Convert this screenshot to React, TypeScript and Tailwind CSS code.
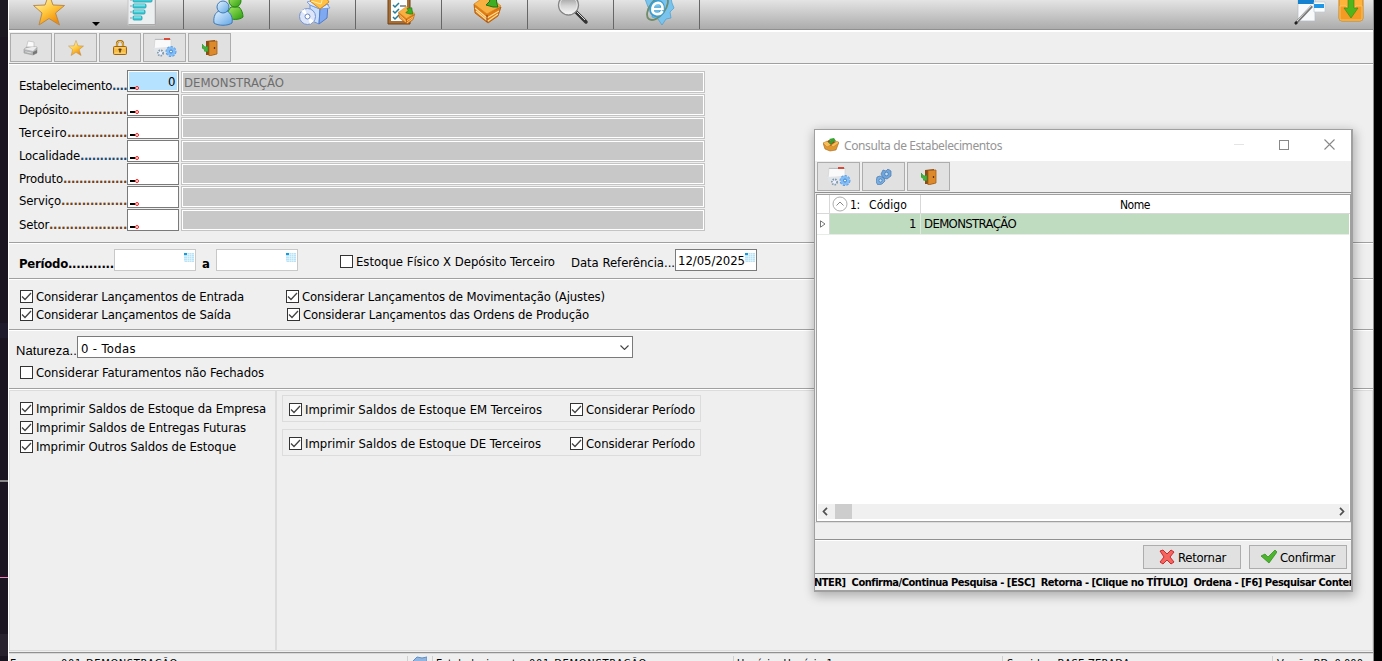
import { useLayoutEffect, useRef, useState } from 'react';
import type { ReactNode } from 'react';

const ui = 'font-["DejaVu_Sans_Condensed","DejaVu_Sans",sans-serif] font-stretch-condensed';

/* Single line of text whose tracking is adjusted so that it spans `w` pixels. */
function T({ w, children, className = '' }: { w: number; children: string; className?: string }) {
  const ref = useRef<HTMLSpanElement>(null);
  const [tracking, setTracking] = useState(0);
  useLayoutEffect(() => {
    const el = ref.current;
    if (!el) return;
    const natural = el.getBoundingClientRect().width - tracking * children.length;
    setTracking((w - natural) / children.length);
  }, [w, children]);
  return (
    <span
      ref={ref}
      className={`block h-4 w-max shrink-0 leading-4 whitespace-pre ${className}`}
      style={{ letterSpacing: `${tracking}px` }}
    >
      {children}
    </span>
  );
}

function Check({ checked = true, label, w, className = '' }: { checked?: boolean; label: string; w: number; className?: string }) {
  return (
    <label className={`flex h-[13px] items-center gap-[3px] ${className}`}>
      <span className="block h-[13px] w-[13px] shrink-0 border border-[#333] bg-white">
        {checked && (
          <svg viewBox="0 0 11 11" className="block h-[11px] w-[11px]">
            <path d="M1 5.500 4 8.500 10 2" fill="none" stroke="#444" strokeWidth="1.300" />
          </svg>
        )}
      </span>
      <T w={w}>{label}</T>
    </label>
  );
}

function Calendar({ className = '' }: { className?: string }) {
  return (
    <svg viewBox="0 0 10 9" className={`block h-[9px] w-[10px] shrink-0 ${className}`}>
      <path d="M0 0h10v9H1L0 8z" fill="#b9e4f7" />
      <path d="M0 3.5h10M0 5.5h10M0 7.5h10M3.5 0v9M5.5 0v9M7.5 0v9M3 1.5h7" stroke="#eefaff" strokeWidth=".5" />
      <path d="M0 0h3v2H0z" fill="#159be0" />
    </svg>
  );
}

function Star({ className = '' }: { className?: string }) {
  return (
    <svg viewBox="0 0 32 33" className={className}>
      <defs>
        <linearGradient id="star" x1="0" y1="0" x2="0.6" y2="1">
          <stop offset="0.2" stopColor="#fff2ae" />
          <stop offset="0.6" stopColor="#ffc83d" />
          <stop offset="1" stopColor="#ef8a0a" />
        </linearGradient>
      </defs>
      <path d="M16 1 20 12 31.500 12.500 22.500 20 26.500 32 16 25.500 6 32 9 20 .5 12.500 12 12z" fill="url(#star)" stroke="#b98a4c" strokeWidth="1" />
    </svg>
  );
}

function Chart() {
  return (
    <svg viewBox="0 0 30 33" className="block h-[33px] w-[30px]">
      <path d="M1 0h27v32H1z" fill="#eceff0" stroke="#c4c8c8" />
      <path d="M1.500 31.500h27V4" fill="none" stroke="#aaa" />
      <g fill="#43cbd6" stroke="#1a9cab" strokeWidth=".8">
        <rect x="6" y="5" width="19" height="4" rx="1" />
        <rect x="6" y="11" width="13" height="4" rx="1" />
        <rect x="6" y="17" width="12" height="4" rx="1" />
        <rect x="6" y="23" width="9" height="4" rx="1" />
      </g>
      <path d="M7 6h17M7 12h11M7 18h10M7 24h7" stroke="#aef2f5" />
      <path d="M3 7h2M3 13h2M3 19h2M3 25h2" stroke="#99a" />
    </svg>
  );
}

function Users() {
  return (
    <svg viewBox="0 0 32 33" className="block h-[33px] w-8">
      <defs>
        <linearGradient id="ub" x1="0" y1="0" x2="1" y2="1"><stop stopColor="#e4f3ff" /><stop offset="1" stopColor="#5fa6e4" /></linearGradient>
        <linearGradient id="ug" x1="0" y1="0" x2="1" y2="1"><stop stopColor="#a8ea68" /><stop offset="1" stopColor="#2a9d0e" /></linearGradient>
      </defs>
      <path d="M14 25c0-5 2-9 4-11h8c3 3 4 7 4 10-3 3-11 3-16 1z" fill="url(#ug)" stroke="#25870f" />
      <circle cx="22" cy="8" r="6" fill="url(#ug)" stroke="#25870f" />
      <path d="M1 30c-1-7 2-11 5-12h8c4 2 6 7 5 12-4 3-14 3-18 0z" fill="url(#ub)" stroke="#4079b8" />
      <circle cx="10" cy="14" r="6" fill="url(#ub)" stroke="#4079b8" />
    </svg>
  );
}

function DiscBox() {
  return (
    <svg viewBox="0 0 32 33" className="block h-[33px] w-8">
      <path d="M11 12 21 16 20 31 11 27z" fill="#c8defb" stroke="#6d93d9" />
      <path d="M21 16 29 11 28 25 20 31z" fill="#7fa9f0" stroke="#537bc7" />
      <path d="m11 12-3-3 7-2 6 9zM21 16l10-1-3-4z" fill="#dce9fc" stroke="#6d93d9" strokeWidth=".8" />
      <path d="m11 8 13-8 6 9-9 7z" fill="#ffc044" stroke="#d38618" />
      <path d="m12 8 10 3 2-7" fill="none" stroke="#fff0ad" />
      <circle cx="8.500" cy="23.500" r="8" fill="#dce6f8" stroke="#7693d1" />
      <path d="M8.500 23.500 2 18l4-2zM8.500 23.500 15 28l-4 3z" fill="#fff" />
      <circle cx="8.500" cy="23.500" r="2.500" fill="#fff" stroke="#6b87c4" />
    </svg>
  );
}

function BoxArt() {
  return (
    <g>
      <path d="M1 13 14 22 28 16 25 25 15 32 2 22z" fill="#e07a12" stroke="#a8570d" strokeWidth=".8" />
      <path d="M1 13 14 4 28 15 14 23z" fill="#f9b040" stroke="#d58a24" strokeWidth=".8" />
      <path d="m2 17 12 10 12-7M3 20l12 10 10-7" fill="none" stroke="#ffe09b" strokeWidth="1.100" />
      <path d="M14 24v7" stroke="#8c3d0b" />
      <path d="m13 14 7 2 5 0-1-3-1-7-8 1 2 3z" fill="#3fae24" stroke="#19730f" />
    </g>
  );
}

function Clipboard() {
  return (
    <svg viewBox="0 0 30 33" className="block h-[33px] w-[30px]">
      <path d="M2 0h22v31H2z" fill="#a66d35" stroke="#704319" />
      <path d="M5 2h16v26H5z" fill="#fbfcfd" />
      <path d="M8 6h11M14 13h6M14 19h4" stroke="#777" strokeWidth="1.300" />
      <path d="m7 12 2 2 4-4M7 18l2 2 4-4M7 24l2 2 4-4" fill="none" stroke="#237c93" strokeWidth="1.500" />
      <g transform="translate(12 11) scale(.6 .63)"><BoxArt /></g>
    </svg>
  );
}

function Package() {
  return <svg viewBox="0 0 30 33" className="block h-[33px] w-[30px]"><g transform="translate(1 -2)"><BoxArt /></g></svg>;
}

function Magnifier() {
  return (
    <svg viewBox="0 0 32 33" className="block h-[33px] w-8">
      <defs><linearGradient id="lens" x1="0" y1="0" x2="0" y2="1"><stop stopColor="#8e8e8e" /><stop offset=".55" stopColor="#d5d5d5" /><stop offset="1" stopColor="#fafafa" /></linearGradient></defs>
      <path d="m19 19 10 10" stroke="#333" strokeWidth="3.500" strokeLinecap="round" />
      <path d="m20 19 8 8" stroke="#ddd" strokeWidth="1" />
      <circle cx="11.500" cy="12" r="10" fill="url(#lens)" stroke="#858585" strokeWidth="1.300" />
      <circle cx="11.500" cy="12" r="8.700" fill="none" stroke="#eee" strokeWidth=".8" />
    </svg>
  );
}

function WebGear() {
  return (
    <svg viewBox="0 0 32 33" className="block h-[33px] w-8">
      <path d="m2 6 4-1 3-5 5 2 5-2 3 4 6 1 1 5 2 5-4 4 1 6-5 1-4 6-4-6-6-2 1-6-5-4z" fill="#79c4ef" stroke="#4b9dcc" strokeWidth=".7" />
      <ellipse cx="14.500" cy="15" rx="14" ry="7.500" transform="rotate(-52 14.500 15)" fill="none" stroke="#708b68" strokeWidth="1.800" />
      <g transform="translate(-.5 1)">
        <path d="M9 15h11c1-9-10-9-11-1-1 8 8 9 11 3" fill="none" stroke="#3b9dd0" strokeWidth="4.500" />
        <path d="M10 15h10c1-8-9-8-10-1-1 7 7 8 10 3" fill="none" stroke="#fff" strokeWidth="2.700" />
      </g>
    </svg>
  );
}

function Notes() {
  return (
    <svg viewBox="0 0 32 33" className="block h-[33px] w-8">
      <path d="M4 5h17v23H4z" fill="#f7f9fb" stroke="#b5bcc2" strokeWidth=".7" />
      <path d="M4 6h16v5H4z" fill="#1682cf" />
      <path d="M20 9h11v10H20z" fill="#fafcfe" stroke="#bcc8d0" strokeWidth=".7" />
      <path d="M20 11h10v4H20z" fill="#2096e4" />
      <path d="M2 30 18 13" stroke="#777" strokeWidth="2.600" />
      <path d="M3 28 18 12" stroke="#ddd" strokeWidth="1" />
      <path d="m1 31 2-2" stroke="#222" strokeWidth="2.500" />
    </svg>
  );
}

function Download() {
  return (
    <svg viewBox="0 0 26 30" className="block h-[30px] w-[26px]">
      <rect x="1" y="1" width="24" height="28" rx="3" fill="#ffb338" stroke="#c7821d" />
      <path d="M2 14h6l2 3h6l2-3h6v14H2z" fill="#f59a22" stroke="#ffd17b" strokeWidth=".7" />
      <path d="M10 4h6v12h4l-7 10-7-10h4z" fill="#52b51c" stroke="#398510" strokeWidth=".6" />
    </svg>
  );
}

function Printer() {
  return (
    <svg viewBox="0 0 16 16" className="block h-4 w-4">
      <path d="m5 1 6 1v7H3z" fill="#fafafa" stroke="#bbb" strokeWidth=".7" />
      <path d="m1 9 3-2 10 0v6l-4 2-9-2z" fill="#b4b7b9" stroke="#999" strokeWidth=".6" />
      <path d="m1 9 9 2 4-4H9L4 8z" fill="#ececec" />
      <path d="m2 11 7 1.500v1.200l-7-1.500z" fill="#f8f8f8" stroke="#888" strokeWidth=".4" />
      <path d="m10 12 4-2v3l-4 2z" fill="#777" />
    </svg>
  );
}

function Lock() {
  return (
    <svg viewBox="0 0 14 15" className="block h-[15px] w-[14px]">
      <path d="M4 8V4c0-4 6-4 6 0v4" fill="none" stroke="#a66f1c" strokeWidth="2.200" />
      <path d="M4 8V4c0-3.500 6-3.500 6 0v4" fill="none" stroke="#f5c956" />
      <rect x=".5" y="6.500" width="13" height="8" rx="1" fill="#f5bd47" stroke="#9b6513" />
      <path d="M2 8h10M2 13h10" stroke="#ffe18e" strokeWidth=".8" />
      <path d="M7 8.500v4M5.500 9.500h3" stroke="#5d390a" strokeWidth="1.500" />
    </svg>
  );
}

function PrintGear() {
  return (
    <svg viewBox="0 0 24 20" className="block h-5 w-6">
      <path d="M2 1h16v9l-3 2H1z" fill="#fafafa" stroke="#ccc" strokeWidth=".6" />
      <path d="M2 1h16v1H2z" fill="#b9bdc0" /><path d="M11 0h6v2h-6z" fill="#d84939" />
      <path d="m0 10 14-1 3 2v3l-4 1H2z" fill="#e2e5e8" />
      <circle cx="7.500" cy="15" r="2.600" fill="#eef" stroke="#7d9aa8" strokeWidth="1.800" strokeDasharray="1.500 1" />
      <circle cx="18" cy="13.500" r="4" fill="#79b6f4" stroke="#5a9eea" strokeWidth="3" strokeDasharray="2 1" />
      <circle cx="18" cy="13.500" r="4.600" fill="#83bdf4" /><circle cx="18" cy="13.500" r="1.500" fill="#e1f2ff" stroke="#3980cd" />
    </svg>
  );
}

function Door() {
  return (
    <svg viewBox="0 0 16 16" className="block h-4 w-4">
      <path d="m4 1 9-1v15H4z" fill="#8e4b16" />
      <path d="M7 1.500 15 1v13l-8 2z" fill="#dc8a2b" stroke="#a3601a" strokeWidth=".8" />
      <path d="M12.500 7v2" stroke="#6b3208" strokeWidth="1.300" />
      <path d="m0 4 3 3 3-1v6l-4-1 1-1-3-2z" fill="#43b23a" stroke="#238623" strokeWidth=".5" />
    </svg>
  );
}

function Gears() {
  return (
    <svg viewBox="0 0 16 16" className="block h-4 w-4">
      <path d="m7 1 3 1 2-2 3 2v5l-4 3-4-1-2-4z" fill="#6fa5dc" stroke="#4978ad" strokeWidth=".7" />
      <path d="m1 8 3-1 4 2 1 3-3 3-4 1-2-3z" fill="#79afe3" stroke="#4978ad" strokeWidth=".7" />
      <circle cx="10.500" cy="5" r="1.800" fill="#c7e0f7" stroke="#4978ad" strokeWidth=".8" />
      <circle cx="4.500" cy="11.500" r="1.600" fill="#c7e0f7" stroke="#4978ad" strokeWidth=".8" />
    </svg>
  );
}

function Basket() {
  return (
    <svg viewBox="0 0 16 14" className="block h-[14px] w-4">
      <path d="m0 5 8 2 8-3-3 8-6 1-5-2z" fill="#df9830" stroke="#a6621a" strokeWidth=".6" />
      <path d="m1 5 5-3 9 2-7 4z" fill="#8b4e14" />
      <path d="m0 5 4-2 4 4-4 2zM8 7l6-4 2 2-6 4z" fill="#f6bd5a" stroke="#b17322" strokeWidth=".4" />
      <path d="m5 4 3 2 3-3h2l-2-3-5 1 2 2z" fill="#36a331" />
    </svg>
  );
}

function ToolButton({ children, wide = false }: { children: ReactNode; wide?: boolean }) {
  return (
    <button className={`flex h-[29px] shrink-0 items-center justify-center border border-[#adadad] bg-[#e1e1e1] ${wide ? 'w-[43px]' : 'w-[42px]'}`}>
      {children}
    </button>
  );
}

function Cell({ children }: { children: ReactNode }) {
  return <div className="flex h-[29px] w-[86px] shrink-0 items-start justify-center border-r border-[#666] pl-1"><div className="-mt-[7px]">{children}</div></div>;
}

const fields = [
  { label: 'Estabelecimento', w: 93, dots: '....', dw: 15, blue: true, row: 'h-6', lab: 'pt-2' },
  { label: 'Depósito', w: 50, dots: '..............', dw: 58, blue: false, row: 'h-[23px]', lab: 'pt-2' },
  { label: 'Terceiro', w: 48, dots: '...............', dw: 60, blue: false, row: 'h-[23px]', lab: 'pt-2' },
  { label: 'Localidade', w: 61, dots: '............', dw: 47, blue: true, row: 'h-[23px]', lab: 'pt-2' },
  { label: 'Produto', w: 44, dots: '................', dw: 64, blue: false, row: 'h-[23px]', lab: 'pt-2' },
  { label: 'Serviço', w: 42, dots: '................', dw: 66, blue: false, row: 'h-[23px]', lab: 'pt-[7px]' },
  { label: 'Setor', w: 30, dots: '...................', dw: 78, blue: false, row: 'h-[23px]', lab: 'pt-2' },
];

function Dialog() {
  return (
    <div className="absolute top-[129px] left-[814px] flex h-[463px] w-[539px] flex-col border border-r-2 border-b-2 border-[#a0a0a0] bg-[#efefef] shadow-[1px_3px_10px_1px_rgba(0,0,0,0.28)]">
      <header className="flex h-[31px] shrink-0 items-center bg-white pb-[2px] pl-2">
        <Basket />
        <T w={158} className='ml-[5px] pt-px font-["Noto_Sans",sans-serif] text-[12px] text-[#959595]'>Consulta de Estabelecimentos</T>
        <div className="ml-auto flex items-center gap-[35px] pr-[16px]">
          <span className="h-px w-[10px] bg-[#e4e4e4]" />
          <span className="h-[10px] w-[10px] border border-[#888]" />
          <svg viewBox="0 0 11 11" className="block h-[11px] w-[11px]"><path d="m.5.5 10 10M10.500.5l-10 10" stroke="#888" strokeWidth="1.100" /></svg>
        </div>
      </header>
      <div className="flex h-8 shrink-0 gap-[2px] border-b border-[#909090] pt-[1px] pl-[2px]">
        <ToolButton wide><PrintGear /></ToolButton>
        <ToolButton wide><Gears /></ToolButton>
        <ToolButton wide><Door /></ToolButton>
      </div>
      <div className="mt-px ml-px flex h-[328px] w-[535px] shrink-0 flex-col border border-[#a0a0a0] bg-white">
        <div className="flex h-[19px] shrink-0 border-b border-[#d8d8d8] text-[12px]">
          <div className="w-[13px] border-r border-[#d8d8d8]" />
          <div className="flex w-[91px] items-center border-r border-[#d8d8d8] pl-[2px]">
            <svg viewBox="0 0 16 16" className="block h-4 w-4 shrink-0"><circle cx="8" cy="8" r="7" fill="none" stroke="#999" strokeWidth=".8" /><path d="m4.500 9.500 3.500-3.500 3.500 3.500" fill="none" stroke="#888" /></svg>
            <T w={10} className="mt-[2px] ml-[2px]">1:</T>
            <T w={38} className="mt-[2px] ml-[9px]">Código</T>
          </div>
          <div className="flex flex-1 items-center pl-[199px]"><T w={30} className="mt-[2px]">Nome</T></div>
        </div>
        <div className="mr-px flex h-[21px] shrink-0 border-b border-[#e4eee4] bg-[#c0dcc0]">
          <div className="flex w-[13px] shrink-0 items-center justify-center border-r border-[#d8d8d8] bg-white">
            <svg viewBox="0 0 6 8" className="block h-2 w-[6px]"><path d="M.5.8v6.400L5 4z" fill="#fff" stroke="#555" strokeWidth=".8" /></svg>
          </div>
          <div className="flex w-[91px] shrink-0 justify-end border-r border-[#e0e8e0] pt-[2px] pr-1"><T w={7}>1</T></div>
          <T w={95} className="mt-[2px] pl-[3px]">DEMONSTRAÇÃO</T>
        </div>
        <div className="mx-px mt-auto mb-[2px] flex h-[15px] items-center bg-[#f0f0f0] px-[4px]">
          <svg viewBox="0 0 6 9" className="block h-[9px] w-[6px]"><path d="M5 .8 1.500 4.500 5 8.200" fill="none" stroke="#505050" strokeWidth="1.700" /></svg>
          <span className="ml-[7px] h-[15px] w-[17px] bg-[#cdcdcd]" />
          <svg viewBox="0 0 6 9" className="ml-auto block h-[9px] w-[6px]"><path d="M1 .8 4.500 4.500 1 8.200" fill="none" stroke="#505050" strokeWidth="1.700" /></svg>
        </div>
      </div>
      <div className="h-[18px] shrink-0 border-t border-b border-t-[#dcdcdc] border-b-[#909090]" />
      <div className="flex h-[34px] shrink-0 justify-end gap-2 border-t border-b border-t-white border-b-[#909090] pt-[4px] pr-1">
        <button className="flex h-6 w-[98px] items-center border border-[#adadad] bg-[#e1e1e1] pl-[15px]">
          <svg viewBox="0 0 16 16" className="mr-[3px] block h-4 w-4"><path d="m1 2 3-1 4 4 4-4 3 2-4 5 4 5-3 2-4-4-4 4-3-2 4-5z" fill="#f56560" stroke="#c71c20" strokeWidth=".9" /></svg>
          <T w={48} className="mt-[2px]">Retornar</T>
        </button>
        <button className="flex h-6 w-[98px] items-center border border-[#adadad] bg-[#e1e1e1] pl-[11px]">
          <svg viewBox="0 0 16 14" className="mr-[3px] block h-[14px] w-4"><path d="m0 6 4-2 3 3 7-7 2 2-8 11z" fill="#4cb52d" stroke="#2d8718" strokeWidth=".7" /></svg>
          <T w={55} className="mt-[2px]">Confirmar</T>
        </button>
      </div>
      <div className="flex h-4 shrink-0 items-center overflow-hidden text-[11px] font-bold">
        <T w={541} className="mt-[2px] -ml-px">NTER]  Confirma/Continua Pesquisa - [ESC]  Retorna - [Clique no TÍTULO]  Ordena - [F6] Pesquisar Conten</T>
      </div>
    </div>
  );
}

export default function App() {
  return (
    <div className={`relative flex h-[661px] w-[1382px] overflow-hidden bg-black text-[13px] text-black ${ui}`}>
      <aside className="flex w-2 shrink-0 flex-col bg-[#1a1520]">
        <div className="h-[37px] bg-[#1d1922]" />
        <div className="mt-[286px] h-[15px] bg-[#201b2c]" />
        <div className="mt-[142px] h-[2px] bg-[#888]" />
        <div className="mt-[95px] h-px bg-[#f080b8]" />
        <div className="mt-[56px] h-[22px] bg-[#26212c]" />
      </aside>

      <main className="flex w-[1366px] shrink-0 flex-col border-r border-l border-r-[#909090] border-l-white bg-[#efefef]">
        <div className="flex h-[30px] shrink-0 overflow-hidden border-b border-[#909090] bg-linear-to-b from-[#e4e4e4] to-[#acacac]">
          <div className="flex h-[29px] w-[175px] shrink-0 border-r border-[#666]">
            <Star className="-mt-[7px] ml-[24px] block h-[33px] w-8" />
            <svg viewBox="0 0 8 4" className="mt-[22px] ml-[27px] block h-1 w-2"><path d="M0 0h8L4 4z" /></svg>
            <div className="-mt-[7px] ml-[27px]"><Chart /></div>
          </div>
          <Cell><Users /></Cell>
          <Cell><DiscBox /></Cell>
          <Cell><Clipboard /></Cell>
          <Cell><Package /></Cell>
          <Cell><Magnifier /></Cell>
          <Cell><WebGear /></Cell>
          <div className="-mt-[7px] ml-auto"><Notes /></div>
          <div className="-mt-[8px] mr-[9px] ml-[12px]"><Download /></div>
        </div>

        <div className="flex h-[34px] shrink-0 gap-[3px] border-t-2 border-b border-t-white border-b-[#a0a0a0] pt-px pl-px">
          <ToolButton><Printer /></ToolButton>
          <div className="-ml-px flex gap-[2px]">
            <ToolButton wide><Star className="block h-4 w-4" /></ToolButton>
            <ToolButton><Lock /></ToolButton>
            <ToolButton wide><PrintGear /></ToolButton>
            <ToolButton wide><Door /></ToolButton>
          </div>
        </div>

        <section className="h-[179px] shrink-0 border-t border-b border-t-white border-b-[#a0a0a0] pt-[5px] pl-[10px]">
          {fields.map((f, i) => (
            <div key={f.label} className={`flex items-start ${f.row}`}>
              <div className={`flex w-[108px] shrink-0 ${f.lab}`}>
                <T w={f.w}>{f.label}</T>
                <T w={f.dw} className={`font-bold ${f.blue ? 'text-[#1c4c70]' : 'text-[#704418]'}`}>{f.dots}</T>
              </div>
              <div className={`flex h-[22px] w-[52px] shrink-0 justify-between border border-[#7a7a7a] ${i === 0 ? 'bg-[#b5e2ff]' : 'bg-white'} ${i === 0 ? 'shadow-[inset_0_0_0_1px_white]' : ''}`}>
                <svg viewBox="0 0 10 4" className="mt-[15px] ml-[2px] block h-1 w-[10px]"><path d="M0 1h5v2H0z" /><circle cx="7" cy="2" r="1.500" fill="#fff" stroke="#f00" strokeWidth=".9" /></svg>
                {i === 0 && <span className="pt-[3px] pr-[2px]"><T w={8}>0</T></span>}
              </div>
              <div className={`ml-[2px] h-[22px] w-[524px] border border-[#c4c4c4] bg-[#c8c8c8] shadow-[inset_0_0_0_1px_white] ${i === 0 ? 'mt-px' : ''}`}>
                {i === 0 && <T w={102} className="mt-[3px] pl-[2px] text-[#6d6d6d]">DEMONSTRAÇÃO</T>}
              </div>
            </div>
          ))}
        </section>

        <section className="flex h-9 shrink-0 items-start border-t border-b border-t-white border-b-[#a0a0a0] pt-[5px] pl-[10px]">
          <T w={95} className="mt-[7px] font-bold">Período...........</T>
          <div className="flex h-[22px] w-[82px] shrink-0 justify-end border border-[#c8c8c8] bg-white pt-[3px] pr-px"><Calendar /></div>
          <T w={8} className="mt-[7px] ml-[6px] font-bold">a</T>
          <div className="ml-[6px] flex h-[22px] w-[82px] shrink-0 justify-end border border-[#c8c8c8] bg-white pt-[3px] pr-px"><Calendar /></div>
          <Check checked={false} label="Estoque Físico X Depósito Terceiro" w={199} className="mt-[6px] ml-[42px]" />
          <T w={104} className="mt-[6px] ml-4">Data Referência...</T>
          <div className="flex h-[22px] w-[82px] shrink-0 border border-[#7a7a7a] bg-white pl-[2px]">
            <T w={67} className="mt-[3px]">12/05/2025</T>
            <Calendar className="mt-[3px]" />
          </div>
        </section>

        <section className="flex h-[51px] shrink-0 border-t border-b border-t-white border-b-[#a0a0a0] pt-[10px] pl-[11px]">
          <div className="flex w-[266px] flex-col gap-[5px]">
            <Check label="Considerar Lançamentos de Entrada" w={208} />
            <Check label="Considerar Lançamentos de Saída" w={195} />
          </div>
          <div className="flex flex-col gap-[5px]">
            <Check label="Considerar Lançamentos de Movimentação (Ajustes)" w={303} />
            <Check label="Considerar Lançamentos das Ordens de Produção" w={286} className="ml-px" />
          </div>
        </section>

        <section className="h-[59px] shrink-0 border-t border-b border-t-white border-b-[#a0a0a0] pt-[5px] pl-[7px]">
          <div className="flex">
            <T w={61} className='mt-[7px] font-["Liberation_Sans",Arial,sans-serif] text-[13px]'>Natureza..</T>
            <div className="flex h-[22px] w-[556px] items-center border border-[#7a7a7a] bg-white pr-[3px] pl-[3px]">
              <T w={55} className="mt-[4px]">0 - Todas</T>
              <svg viewBox="0 0 9 5" className="ml-auto block h-[5px] w-[9px]"><path d="m.5.5 4 4 4-4" fill="none" stroke="#444" strokeWidth="1.100" /></svg>
            </div>
          </div>
          <Check checked={false} label="Considerar Faturamentos não Fechados" w={228} className="mt-[7px] ml-1" />
        </section>

        <section className="flex h-[264px] shrink-0 border-t border-b border-t-white border-b-[#909090] pb-px">
          <div className="flex w-[268px] shrink-0 flex-col gap-[6px] border border-r-2 border-[#dcdcdc] pt-[11px] pl-[10px]">
            <Check label="Imprimir Saldos de Estoque da Empresa" w={230} />
            <Check label="Imprimir Saldos de Entregas Futuras" w={210} />
            <Check label="Imprimir Outros Saldos de Estoque" w={200} />
          </div>
          <div className="flex flex-1 flex-col gap-[7px] border-t border-r border-b border-[#dcdcdc] pt-1 pl-[5px]">
            {([['Imprimir Saldos de Estoque EM Terceiros', 237], ['Imprimir Saldos de Estoque DE Terceiros', 236]] as const).map(([label, w]) => (
              <div key={label} className="flex h-[27px] w-[419px] border border-[#dcdcdc] pt-[7px] pl-[6px]">
                <div className="w-[281px]"><Check label={label} w={w} /></div>
                <Check label="Considerar Período" w={109} />
              </div>
            ))}
          </div>
        </section>

        <footer className="flex h-2 shrink-0 overflow-hidden border-t border-[#d8d8d8] pt-[2px] text-[11px]">
          <div className="flex w-[399px] shrink-0 gap-[5px] border-r border-[#d0d0d0] pl-px"><T w={46}>Empresa:</T><T w={117}>001-DEMONSTRAÇÃO</T></div>
          <div className="w-[25px] shrink-0 border-r border-[#d0d0d0] pl-[5px]">
            <svg viewBox="0 0 14 12" className="block h-3 w-[14px]"><path d="m0 5 4-4 5 1 5-1v9H0z" fill="#8fb5e0" stroke="#5f8fc6" /></svg>
          </div>
          <div className="flex w-[301px] shrink-0 gap-[3px] border-r border-[#d0d0d0] pl-[3px]"><T w={90}>Estabelecimento:</T><T w={118}>001-DEMONSTRAÇÃO</T></div>
          <div className="w-[269px] shrink-0 border-r border-[#d0d0d0] pl-[3px]"><T w={96}>Usuário: Usuário 1</T></div>
          <div className="w-[270px] shrink-0 border-r border-[#d0d0d0] pl-1"><T w={123}>Servidor: BASE ZERADA</T></div>
          <div className="pl-1"><T w={86}>Versão BD: 0.000</T></div>
        </footer>
      </main>

      <Dialog />
    </div>
  );
}
